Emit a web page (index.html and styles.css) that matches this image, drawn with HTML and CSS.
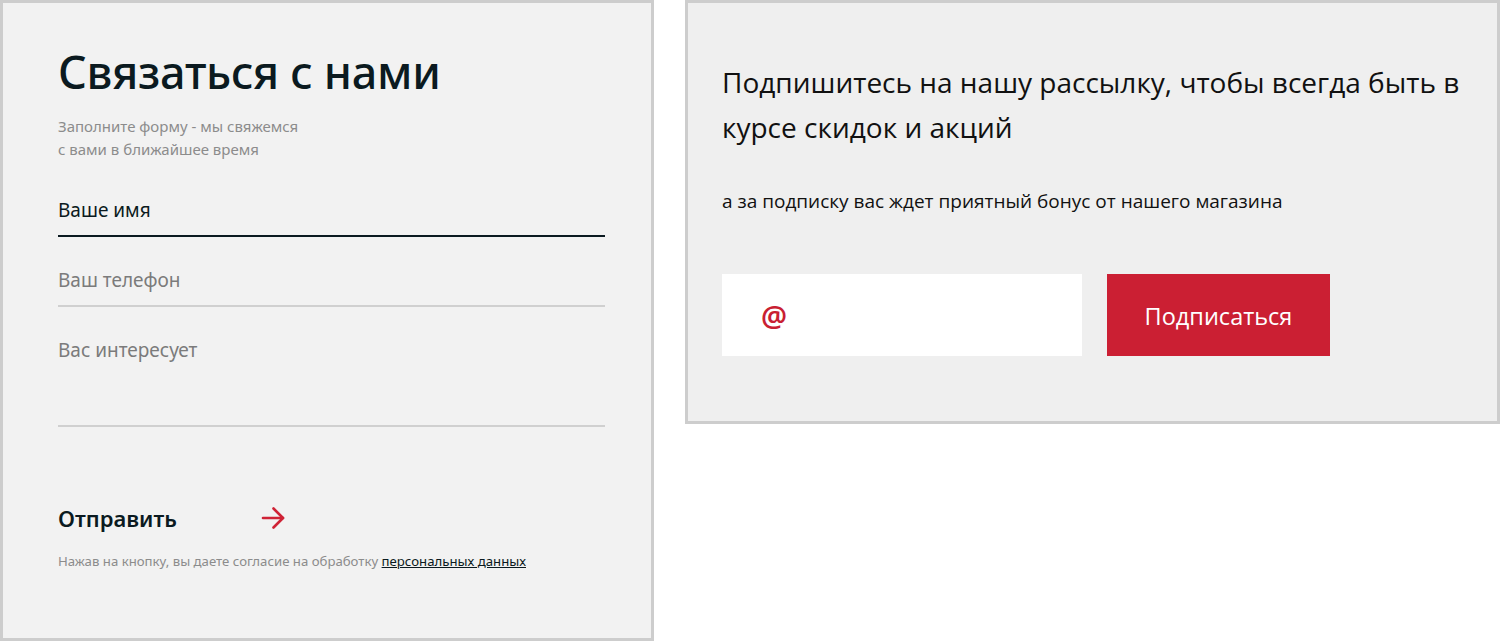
FILE: index.html
```html
<!DOCTYPE html>
<html lang="ru">
<head>
    <meta charset="UTF-8">
    <meta name="viewport" content="width=device-width, initial-scale=1.0">
    <title>Связаться с нами</title>
    <link rel="stylesheet" href="styles.css">
</head>
<body>
    <div class="contact-box">
        <h1 class="contact-title">Связаться с нами</h1>
        <p class="contact-note">Заполните форму - мы свяжемся<br>с вами в ближайшее время</p>

        <form class="contact-form" onsubmit="return false">
            <input type="text" class="field field-active" placeholder="Ваше имя">
            <input type="tel" class="field" placeholder="Ваш телефон">
            <textarea class="field field-area" placeholder="Вас интересует"></textarea>

            <button type="submit" class="send-btn">
                Отправить
                <svg width="24" height="22" viewBox="0 0 24 22" fill="none" stroke="#cf2336" stroke-width="2.6" stroke-linecap="round" stroke-linejoin="round">
                    <path d="M2 11h20"/>
                    <path d="M12.5 1.5L22 11l-9.5 9.5"/>
                </svg>
            </button>

            <p class="consent">Нажав на кнопку, вы даете согласие на обработку <a href="#">персональных данных</a></p>
        </form>
    </div>

    <div class="subscribe-box">
        <h2 class="subscribe-title">Подпишитесь на нашу рассылку, чтобы всегда быть в курсе скидок и акций</h2>
        <p class="subscribe-note">а за подписку вас ждет приятный бонус от нашего магазина</p>

        <form class="subscribe-form" onsubmit="return false">
            <label class="email-box">
                <span class="email-at">@</span>
                <input type="email" class="email-input">
            </label>
            <button type="submit" class="subscribe-btn">Подписаться</button>
        </form>
    </div>
</body>
</html>
```

FILE: styles.css
```css
* {
    box-sizing: border-box;
}
body {
    margin: 0;
    display: flex;
    align-items: flex-start;
    gap: 31px;
    background: #fff;
    font-family: "Noto Sans", Arial, sans-serif;
}

/* left: contact form */
.contact-box {
    width: 654px;
    padding: 44px 46px 69px 55px;
    background: #f2f2f2;
    border: 3px solid #cdcdcd;
}
.contact-title {
    margin: 0;
    font-size: 45px;
    line-height: 50px;
    font-weight: 500;
    letter-spacing: -0.3px;
    color: #0b1a20;
}
.contact-note {
    margin: 18px 0 0;
    font-size: 15px;
    line-height: 23px;
    color: #8c8c8c;
}
.contact-form {
    display: flex;
    flex-direction: column;
    margin-top: 34px;
}
.field {
    width: 100%;
    height: 42px;
    padding: 0 0 10px;
    margin-bottom: 28px;
    border: none;
    border-bottom: 2px solid #d0d0d0;
    background: transparent;
    font-family: inherit;
    font-size: 19px;
    color: #0b1a20;
    outline: none;
}
.field::placeholder {
    color: #7b7b7b;
}
.field-active {
    border-bottom-color: #0b1a20;
}
.field-active::placeholder {
    color: #0b1a20;
}
.field-area {
    height: 92px;
    padding: 0;
    line-height: 30px;
    resize: none;
    margin-bottom: 0;
}
.send-btn {
    display: flex;
    align-items: center;
    gap: 84px;
    align-self: flex-start;
    margin-top: 76px;
    padding: 0;
    border: none;
    background: none;
    font-family: inherit;
    font-size: 22px;
    line-height: 30px;
    font-weight: 600;
    color: #0b1a20;
    cursor: pointer;
}
.consent {
    margin: 20px 0 0;
    font-size: 13.2px;
    line-height: 16px;
    color: #8c8c8c;
}
.consent a {
    color: #0b1a20;
}

/* right: newsletter */
.subscribe-box {
    width: 815px;
    padding: 57px 34px 65px 34px;
    background: #efefef;
    border: 3px solid #cdcdcd;
    font-family: "Open Sans", Arial, sans-serif;
}
.subscribe-title {
    margin: 0;
    font-size: 28px;
    line-height: 45px;
    font-weight: 400;
    color: #111;
}
.subscribe-note {
    margin: 39px 0 0;
    font-size: 19px;
    line-height: 24px;
    color: #111;
}
.subscribe-form {
    display: flex;
    gap: 25px;
    margin-top: 61px;
}
.email-box {
    display: flex;
    align-items: center;
    width: 360px;
    height: 82px;
    padding-left: 39px;
    background: #fff;
}
.email-at {
    font-family: "Noto Sans", Arial, sans-serif;
    font-size: 29px;
    font-weight: 600;
    color: #c91f33;
}
.email-input {
    flex: 1;
    height: 100%;
    margin-left: 10px;
    border: none;
    outline: none;
    background: transparent;
    font-size: 17px;
}
.subscribe-btn {
    width: 223px;
    height: 82px;
    padding-top: 3px;
    border: none;
    background: #cb1f33;
    color: #fff;
    font-family: inherit;
    font-size: 23.5px;
    cursor: pointer;
}
```
